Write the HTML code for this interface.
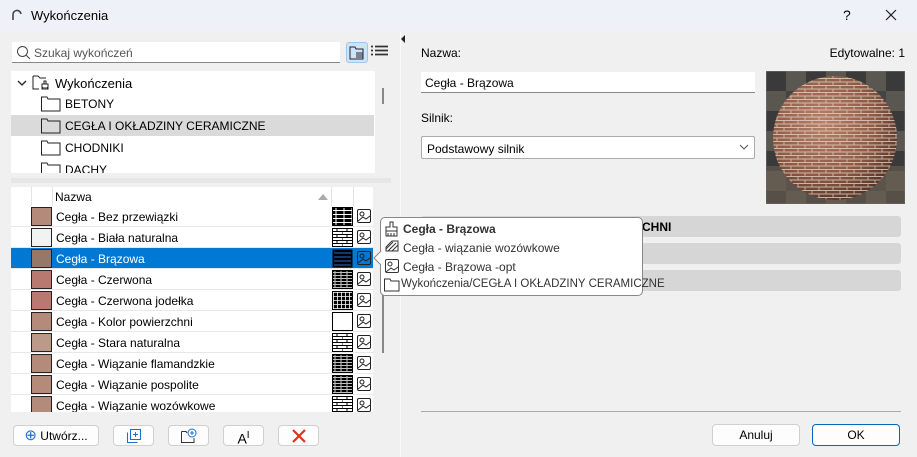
<!DOCTYPE html>
<html><head><meta charset="utf-8"><style>
*{box-sizing:border-box;margin:0;padding:0}
body{width:917px;height:457px;overflow:hidden;background:#f0f0f0;font-family:"Liberation Sans",sans-serif;font-size:12px;color:#000;position:relative}
.a{position:absolute}
.title{left:0;top:0;width:917px;height:31px;background:#eef2f8}
.btn{position:absolute;height:21px;background:#fdfdfd;border:1px solid #d0d0d0;border-radius:4px;text-align:center;line-height:19px;font-size:12px}
.row{position:absolute;left:11px;width:362px;height:21px;border-bottom:1px solid #e8e8e8;background:#fff}
.row .sw{position:absolute;left:20px;top:1px;width:21px;height:19px;border:1px solid #222}
.row .t{position:absolute;left:45px;top:4px}
.row svg.p{position:absolute;left:321px;top:1px}
.row svg.i{position:absolute;left:346px;top:3px}
.bar{position:absolute;left:421px;width:480px;height:21px;background:#d6d6d6;border-radius:3px}
</style></head><body>
<svg width="0" height="0" style="position:absolute"><defs>
<pattern id="b1" width="8" height="4" patternUnits="userSpaceOnUse"><rect width="8" height="4" fill="#000"/><path d="M0 3.5H8M4 0V3" stroke="#fff" stroke-width="1"/></pattern>
<pattern id="b2" width="10" height="6" patternUnits="userSpaceOnUse"><rect width="10" height="6" fill="#fff"/><path d="M0 .5H10M5 0V3M0 3.5H10M0 3V6" stroke="#000"/></pattern>
<pattern id="b3" width="6" height="3" patternUnits="userSpaceOnUse"><rect width="6" height="3" fill="#000"/><path d="M0 2.5H6M3 0V2" stroke="#fff" stroke-width=".8"/></pattern>
<pattern id="b4" width="4" height="4" patternUnits="userSpaceOnUse"><rect width="4" height="4" fill="#000"/><path d="M0 1.5H4M1.5 0V4" stroke="#fff" stroke-width=".8"/></pattern>
<g id="img"><rect x=".5" y=".5" width="13" height="13" rx="1.5" fill="none" stroke="#222"/><circle cx="5" cy="5" r="2" fill="none" stroke="#222"/><path d="M1 12L6 8L9 10L13 7" fill="none" stroke="#222"/></g>
<pattern id="brk" width="14" height="7" patternUnits="userSpaceOnUse"><rect width="14" height="7" fill="none"/><path d="M0 .5H14M0 4H14M4 .5V4M11 4V7" stroke="#e6d8cc" stroke-width=".9" opacity=".75"/></pattern>
</defs></svg>
<div class="a title"></div>
<svg class="a" style="left:11px;top:9px" width="12" height="12"><path d="M2 11V6A4 4 0 0 1 10 5" fill="none" stroke="#444" stroke-width="1.6"/></svg>
<div class="a" style="left:31px;top:8px;font-size:13px">Wykończenia</div>
<div class="a" style="left:843px;top:7px;font-size:14px">?</div>
<svg class="a" style="left:885px;top:9px" width="12" height="12"><path d="M1 1L11 11M11 1L1 11" stroke="#222" stroke-width="1.2"/></svg>
<div class="a" style="left:12px;top:42px;width:328px;height:21px;background:#fff;border-bottom:1px solid #888"></div>
<svg class="a" style="left:16px;top:45px" width="16" height="16"><circle cx="6.5" cy="6.5" r="5" fill="none" stroke="#444"/><path d="M10 10L14 14" stroke="#444"/></svg>
<div class="a" style="left:34px;top:46px;color:#555">Szukaj wykończeń</div>
<div class="a" style="left:346px;top:42px;width:22px;height:21px;background:#cde4f7;border:1px solid #9cc7ee;border-radius:3px"></div>
<svg class="a" style="left:349px;top:45px" width="16" height="15"><path d="M1 2H6L7 4H14V14H1Z" fill="none" stroke="#223"/><path d="M7 8H14M7 10H14M7 12H14" stroke="#223"/></svg>
<svg class="a" style="left:371px;top:45px" width="17" height="12"><path d="M0 1.5H2M4 1.5H17M0 5.5H2M4 5.5H17M0 9.5H2M4 9.5H17" stroke="#333" stroke-width="1.8"/></svg>
<div class="a" style="left:11px;top:71px;width:364px;height:102px;background:#fff;overflow:hidden">
<svg class="a" style="left:6px;top:8px" width="10" height="8"><path d="M1 2L5 6L9 2" fill="none" stroke="#222" stroke-width="1.3"/></svg>
<svg class="a" style="left:21px;top:3px" width="20" height="17"><path d="M1 2H6L8 4H14M1 2V15H7" fill="none" stroke="#222"/><path d="M10 15V10H16V15ZM12 10V7H14V10M11 15V13M13 15V13M15 15V13" fill="none" stroke="#222"/></svg>
<div class="a" style="left:44px;top:5px;font-size:13px">Wykończenia</div>
<div class="a" style="left:0;top:44px;width:363px;height:21px;background:#dadada"></div>
<div class="a" style="left:54px;top:26px">BETONY</div>
<div class="a" style="left:54px;top:48px">CEGŁA I OKŁADZINY CERAMICZNE</div>
<div class="a" style="left:54px;top:70px">CHODNIKI</div>
<div class="a" style="left:54px;top:92px">DACHY</div>
<svg class="a" style="left:30px;top:23px" width="20" height="90"><g fill="none" stroke="#222"><path d="M.5 3H6L7 5H19V17H.5Z"/><path d="M.5 25H6L7 27H19V39H.5Z"/><path d="M.5 47H6L7 49H19V61H.5Z"/><path d="M.5 69H6L7 71H19V83H.5Z"/></g></svg>
</div>
<div class="a" style="left:382px;top:88px;width:2px;height:16px;background:#888"></div>
<div class="a" style="left:11px;top:178px;width:380px;height:5px;background:#e6e6e6"></div>
<div class="a" style="left:11px;top:187px;width:362px;height:19px;background:#fff"></div>
<div class="a" style="left:31px;top:187px;width:1px;height:19px;background:#e4e4e4"></div>
<div class="a" style="left:52px;top:187px;width:1px;height:19px;background:#e4e4e4"></div>
<div class="a" style="left:331px;top:187px;width:1px;height:19px;background:#e4e4e4"></div>
<div class="a" style="left:353px;top:187px;width:1px;height:19px;background:#e4e4e4"></div>
<div class="a" style="left:55px;top:190px">Nazwa</div>
<svg class="a" style="left:318px;top:194px" width="10" height="6"><path d="M0 6L5 0L10 6Z" fill="#aaa"/></svg>

<div class="row" style="top:206px"><div class="sw" style="background:#b48a7a"></div><div class="t">Cegła - Bez przewiązki</div><svg class="p" width="21" height="19"><rect x=".5" y=".5" width="20" height="18" fill="url(#b1)" stroke="#000"/></svg><svg class="i" width="14" height="14"><use href="#img"/></svg></div>
<div class="row" style="top:227px"><div class="sw" style="background:#f2f2f2"></div><div class="t">Cegła - Biała naturalna</div><svg class="p" width="21" height="19"><rect x=".5" y=".5" width="20" height="18" fill="url(#b2)" stroke="#000"/></svg><svg class="i" width="14" height="14"><use href="#img"/></svg></div>
<div class="row" style="top:248px;background:#0078d4;color:#fff"><div class="sw" style="background:#957869"></div><div class="t">Cegła - Brązowa</div><svg class="p" width="21" height="19"><rect x=".5" y=".5" width="20" height="18" fill="#000"/><path d="M2 4H19M2 8H19M2 12H19M2 16H19" stroke="#2a6bd4"/></svg><svg class="i" width="14" height="14"><use href="#img"/></svg></div>
<div class="row" style="top:269px"><div class="sw" style="background:#b87a70"></div><div class="t">Cegła - Czerwona</div><svg class="p" width="21" height="19"><rect x=".5" y=".5" width="20" height="18" fill="url(#b3)" stroke="#000"/></svg><svg class="i" width="14" height="14"><use href="#img"/></svg></div>
<div class="row" style="top:290px"><div class="sw" style="background:#b87a70"></div><div class="t">Cegła - Czerwona jodełka</div><svg class="p" width="21" height="19"><rect x=".5" y=".5" width="20" height="18" fill="url(#b4)" stroke="#000"/></svg><svg class="i" width="14" height="14"><use href="#img"/></svg></div>
<div class="row" style="top:311px"><div class="sw" style="background:#b48a7a"></div><div class="t">Cegła - Kolor powierzchni</div><svg class="p" width="21" height="19"><rect x=".5" y=".5" width="20" height="18" fill="#fff" stroke="#000"/></svg><svg class="i" width="14" height="14"><use href="#img"/></svg></div>
<div class="row" style="top:332px"><div class="sw" style="background:#bb9a8a"></div><div class="t">Cegła - Stara naturalna</div><svg class="p" width="21" height="19"><rect x=".5" y=".5" width="20" height="18" fill="url(#b2)" stroke="#000"/></svg><svg class="i" width="14" height="14"><use href="#img"/></svg></div>
<div class="row" style="top:353px"><div class="sw" style="background:#b48a7a"></div><div class="t">Cegła - Wiązanie flamandzkie</div><svg class="p" width="21" height="19"><rect x=".5" y=".5" width="20" height="18" fill="url(#b3)" stroke="#000"/></svg><svg class="i" width="14" height="14"><use href="#img"/></svg></div>
<div class="row" style="top:374px"><div class="sw" style="background:#b48a7a"></div><div class="t">Cegła - Wiązanie pospolite</div><svg class="p" width="21" height="19"><rect x=".5" y=".5" width="20" height="18" fill="url(#b3)" stroke="#000"/></svg><svg class="i" width="14" height="14"><use href="#img"/></svg></div>
<div class="row" style="top:395px;height:17px;border:none;overflow:hidden"><div class="sw" style="background:#b48a7a"></div><div class="t">Cegła - Wiązanie wozówkowe</div><svg class="p" width="21" height="19"><rect x=".5" y=".5" width="20" height="18" fill="url(#b2)" stroke="#000"/></svg><svg class="i" width="14" height="14"><use href="#img"/></svg></div>
<div class="a" style="left:382px;top:225px;width:2px;height:128px;background:#888"></div>

<div class="btn" style="left:13px;top:425px;width:86px"><span style="color:#1a6fd4;font-size:15px">⊕</span> Utwórz...</div>
<div class="btn" style="left:113px;top:425px;width:41px"><svg width="16" height="16" style="margin-top:2px"><rect x="4.5" y="1.5" width="10" height="10" fill="none" stroke="#1a6fd4"/><path d="M1.5 4.5V14.5H11.5M9.5 4V9M7 6.5H12" fill="none" stroke="#1a6fd4"/></svg></div>
<div class="btn" style="left:168px;top:425px;width:41px"><svg width="18" height="16" style="margin-top:2px"><path d="M1.5 3.5H6L7 5M1.5 3.5V14.5H14V10" fill="none" stroke="#333"/><circle cx="12" cy="5" r="4" fill="none" stroke="#1a6fd4"/><path d="M12 3V7M10 5H14" stroke="#1a6fd4"/></svg></div>
<div class="btn" style="left:223px;top:425px;width:41px;font-size:14px">A<sup style="font-size:10px">I</sup></div>
<div class="btn" style="left:278px;top:425px;width:41px"><svg width="14" height="14" style="margin-top:3px"><path d="M1 1L13 13M13 1L1 13" stroke="#e0321e" stroke-width="2.2"/></svg></div>

<div class="a" style="left:400px;top:31px;width:1px;height:426px;background:#fafafa"></div>
<svg class="a" style="left:401px;top:35px" width="5" height="8"><path d="M4 0L0 4L4 8Z" fill="#222"/></svg>

<div class="a" style="left:421px;top:46px">Nazwa:</div>
<div class="a" style="right:12px;top:46px">Edytowalne: 1</div>
<div class="a" style="left:421px;top:72px;width:334px;height:21px;background:#fff;border-bottom:1px solid #888;padding:4px 4px">Cegła - Brązowa</div>
<div class="a" style="left:421px;top:111px">Silnik:</div>
<div class="a" style="left:421px;top:136px;width:334px;height:23px;background:#fff;border:1px solid #aaa;border-radius:2px;padding:5px 5px">Podstawowy silnik</div>
<svg class="a" style="left:739px;top:144px" width="10" height="6"><path d="M1 1L5 5L9 1" fill="none" stroke="#555"/></svg>
<svg class="a" style="left:766px;top:71px" width="139" height="133"><defs><radialGradient id="sp" cx=".4" cy=".38" r=".7"><stop offset="0" stop-color="#b88068"/><stop offset=".6" stop-color="#8e5a44"/><stop offset="1" stop-color="#4a2e22"/></radialGradient><pattern id="ck" width="40" height="40" patternUnits="userSpaceOnUse"><rect width="40" height="40" fill="#5a5650"/><rect width="20" height="20" fill="#3a3a3a"/><rect x="20" y="20" width="20" height="20" fill="#444"/></pattern><clipPath id="cc"><circle cx="69" cy="67" r="62"/></clipPath></defs><rect width="139" height="133" fill="url(#ck)" stroke="#777"/><rect y="95" width="139" height="38" fill="#6a5f52" opacity=".6"/><circle cx="69" cy="67" r="62" fill="url(#sp)"/><rect x="7" y="5" width="124" height="124" fill="url(#brk)" clip-path="url(#cc)"/></svg>
<div class="bar" style="top:216px"></div>
<div class="bar" style="top:243px"></div>
<div class="bar" style="top:270px"></div>
<div class="a" style="left:642px;top:220px;font-weight:bold">CHNI</div>
<div class="a" style="left:380px;top:217px;width:263px;height:79px;background:#fff;border:1px solid #888;border-radius:5px"></div>
<svg class="a" style="left:373px;top:251px" width="9" height="14"><path d="M8 0L1 7L8 14" fill="#fff" stroke="#888"/></svg>
<svg class="a" style="left:384px;top:221px" width="16" height="72"><g fill="none" stroke="#333"><path d="M6 1H9V6H13V10H2V6H6ZM2 10V15H13V10M4 15V12M7 15V12M10 15V12"/><path d="M2 26L8 20H14V30H2ZM4 30L12 22M8 30L14 24M2 28L9 21"/><rect x="1.5" y="38.5" width="13" height="13" rx="1.5"/><circle cx="6" cy="43" r="2"/><path d="M2 51L7 47L10 49L14 46"/><path d="M.5 58H6L7 60H15V70H.5Z"/></g></svg>
<div class="a" style="left:403px;top:222px;font-weight:bold;color:#333">Cegła - Brązowa</div>
<div class="a" style="left:403px;top:241px;color:#333">Cegła - wiązanie wozówkowe</div>
<div class="a" style="left:403px;top:260px;color:#333">Cegła - Brązowa -opt</div>
<div class="a" style="left:401px;top:278px;color:#333;font-size:11.5px">Wykończenia/CEGŁA I OKŁADZINY CERAMICZNE</div>
<div class="a" style="left:421px;top:411px;width:480px;height:1px;background:#aaa"></div>
<div class="btn" style="left:712px;top:424px;width:88px;height:22px;line-height:20px">Anuluj</div>
<div class="btn" style="left:812px;top:424px;width:88px;height:22px;line-height:20px;border-color:#0067c0">OK</div>
</body></html>
